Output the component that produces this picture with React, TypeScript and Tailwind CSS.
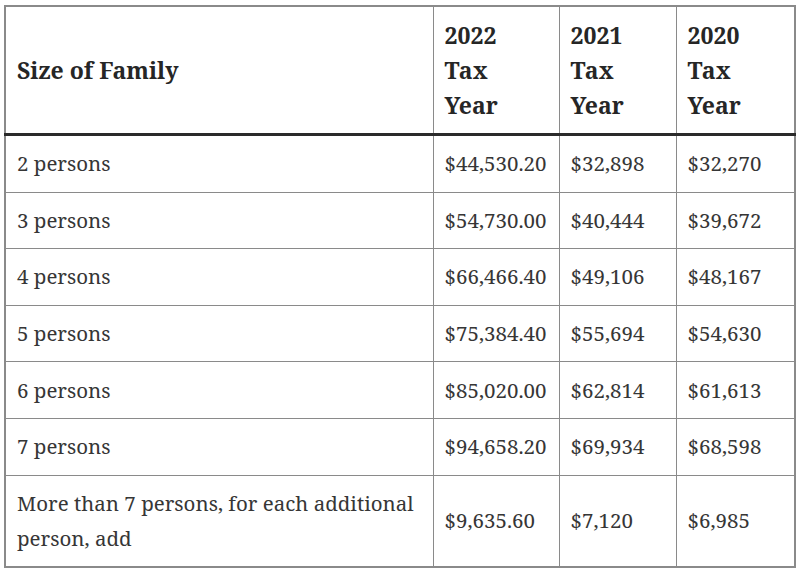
const rows: [string, string, string, string][] = [
  ['2 persons', '$44,530.20', '$32,898', '$32,270'],
  ['3 persons', '$54,730.00', '$40,444', '$39,672'],
  ['4 persons', '$66,466.40', '$49,106', '$48,167'],
  ['5 persons', '$75,384.40', '$55,694', '$54,630'],
  ['6 persons', '$85,020.00', '$62,814', '$61,613'],
  ['7 persons', '$94,658.20', '$69,934', '$68,598'],
  ['More than 7 persons, for each additional person, add', '$9,635.60', '$7,120', '$6,985'],
];

const years = ['2022', '2021', '2020'];

export default function App() {
  return (
    <div className="bg-white w-[800px] h-[570px] pt-[5px] pl-[4px] font-['Noto_Serif','DejaVu_Serif',serif]">
      <table className="w-[790px] table-fixed border-collapse border-2 border-[#8a8a8a] text-[20.5px] leading-[35px] text-[#363636]">
        <colgroup>
          <col className="w-[428px]" />
          <col className="w-[126px]" />
          <col className="w-[117px]" />
          <col className="w-[119px]" />
        </colgroup>
        <thead>
          <tr className="border-b-[3px] border-[#2a2a2a]">
            <th className="border border-[#8a8a8a] px-[11px] py-[10.5px] text-left text-[23px] font-bold text-[#262626]">
              Size of Family
            </th>
            {years.map((y) => (
              <th
                key={y}
                className="border border-[#8a8a8a] px-[11px] py-[10.5px] text-left text-[23px] font-bold text-[#262626]"
              >
                {y}
                <br />
                Tax
                <br />
                Year
              </th>
            ))}
          </tr>
        </thead>
        <tbody>
          {rows.map((r) => (
            <tr key={r[0]}>
              {r.map((cell, i) => (
                <td key={i} className="border border-[#8a8a8a] px-[11px] py-[10.3px] align-middle">
                  {cell}
                </td>
              ))}
            </tr>
          ))}
        </tbody>
      </table>
    </div>
  );
}
